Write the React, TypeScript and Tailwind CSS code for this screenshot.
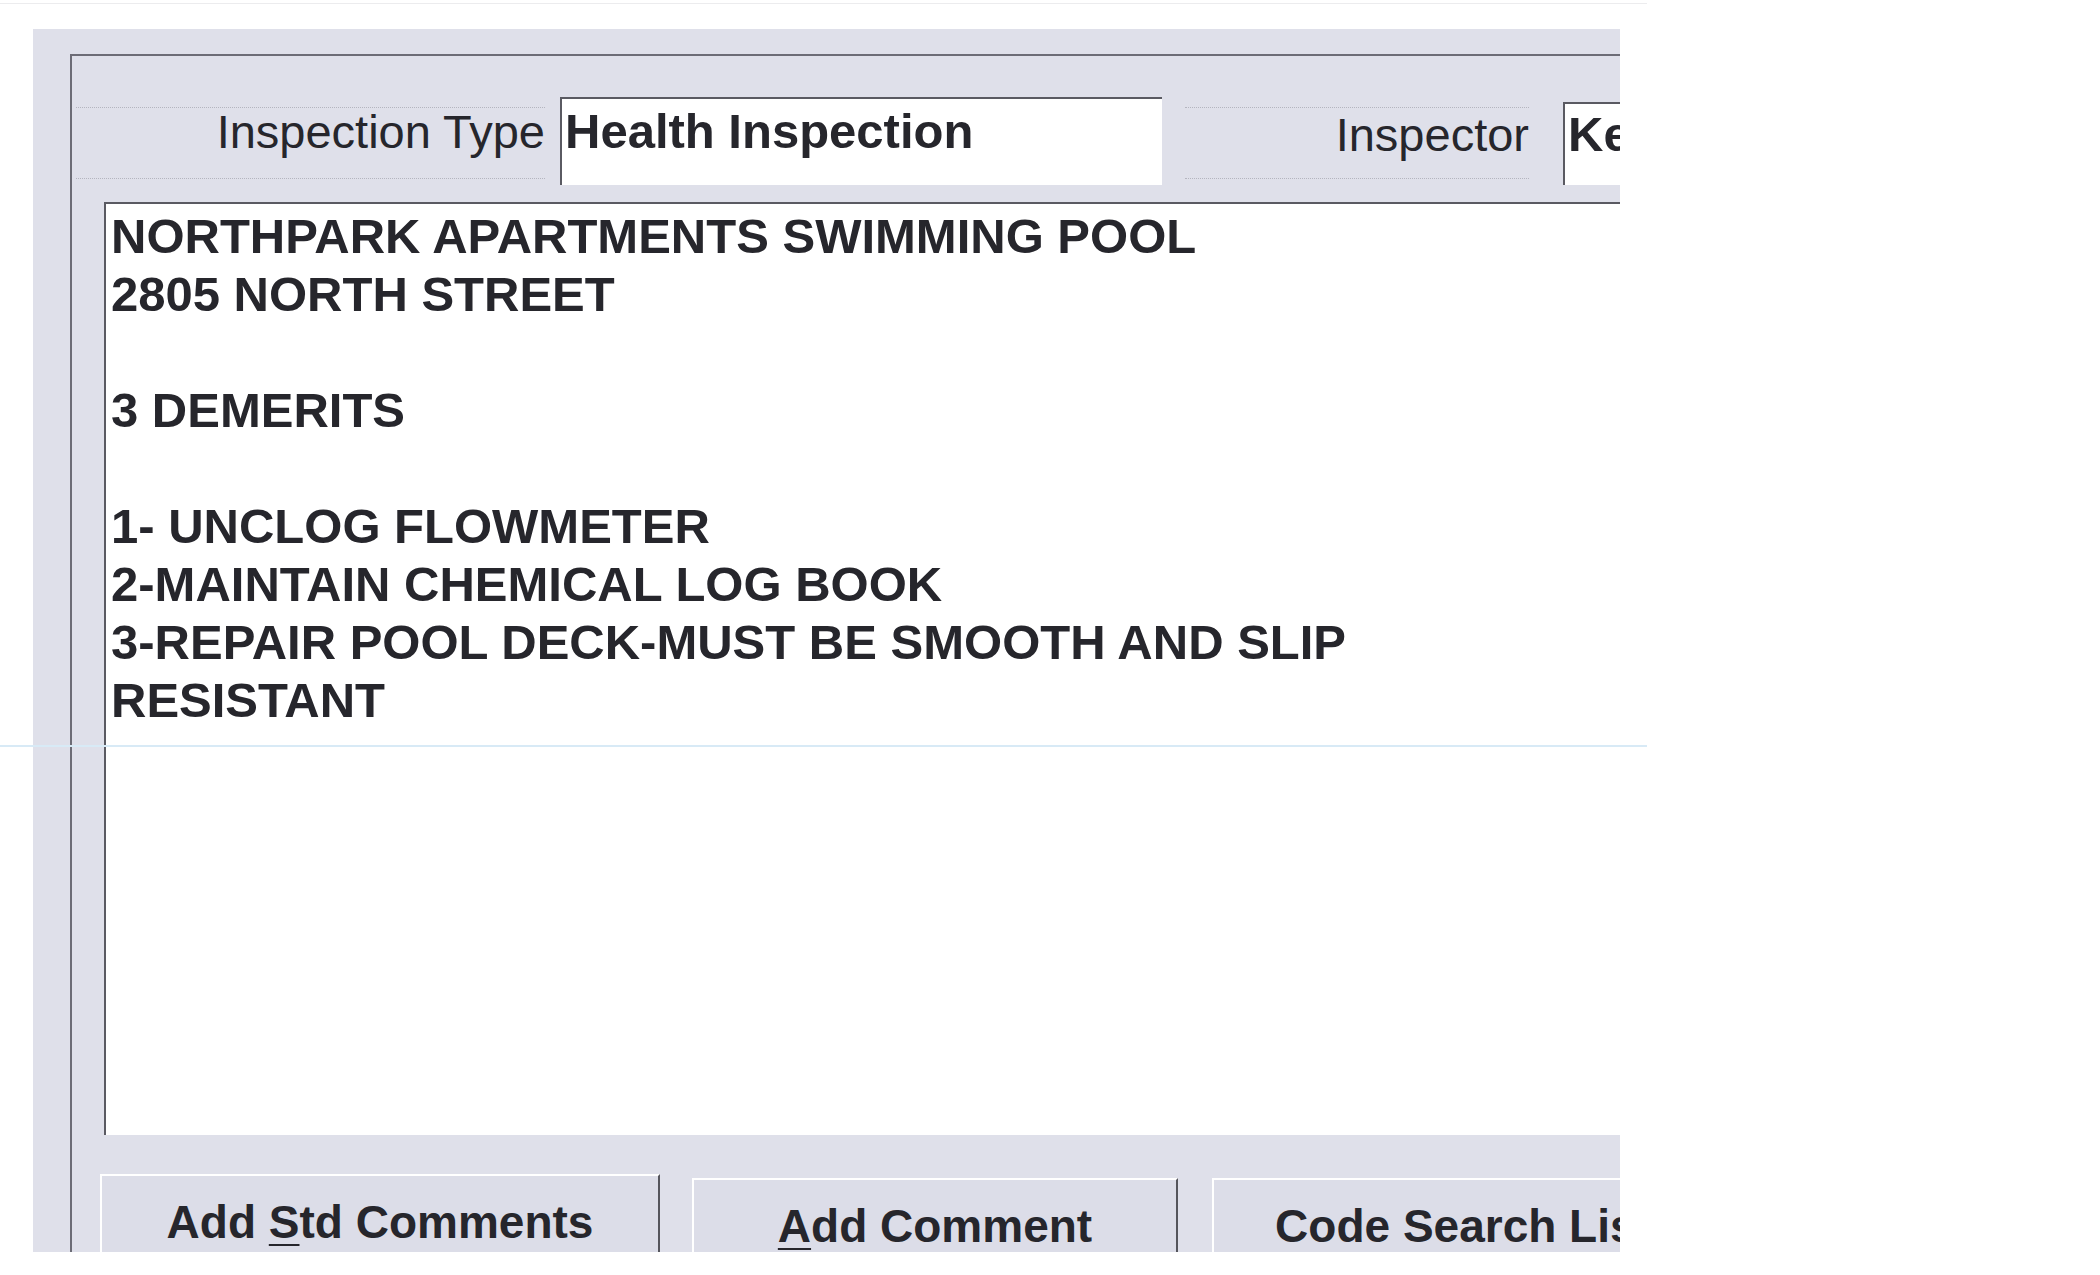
import React from "react";

const lines = [
  "NORTHPARK APARTMENTS SWIMMING POOL",
  "2805 NORTH STREET",
  "",
  "3 DEMERITS",
  "",
  "1- UNCLOG FLOWMETER",
  "2-MAINTAIN CHEMICAL LOG BOOK",
  "3-REPAIR POOL DECK-MUST BE SMOOTH AND SLIP",
  "RESISTANT",
];

const FormButton = ({ width, left, children }: { width: string; left: string; children: React.ReactNode }) => (
  <div
    className={`${width} ${left} h-[120px] shrink-0 border-t-2 border-l-2 border-r-2 border-t-white border-l-white border-r-[#55555c] bg-[#dcdde8] pt-[23px] text-center text-[46px] font-bold leading-[46px] whitespace-nowrap`}
  >
    {children}
  </div>
);

export default function App() {
  return (
    <div className="relative w-[2100px] h-[1275px] overflow-hidden bg-white font-['Liberation_Sans',Arial,sans-serif] text-[#26262c]">
      <div className="mt-[3px] h-px w-[1647px] bg-[#ececee]" />
      <div className="ml-[33px] mt-[25px] h-[1223px] w-[1587px] overflow-hidden bg-[#dfe0ea] pl-[37px] pt-[25px]">
        <div className="flex h-full w-[2000px] flex-col border-l-2 border-t-2 border-[#6c6c76]">
          {/* header row */}
          <div className="flex h-[146px] shrink-0 items-start">
            <div className="ml-[4px] mt-[51px] h-[72px] w-[469px] shrink-0 border-y border-dotted border-[#b4b5bf] pt-[1px] text-right text-[47px] leading-[46px]">
              Inspection Type
            </div>
            <div className="ml-[15px] mt-[41px] h-[88px] w-[602px] shrink-0 border-l-2 border-t-2 border-[#5a5a62] bg-white pl-[3px] pt-[4px] text-[49px] font-bold leading-[56px]">
              Health Inspection
            </div>
            <div className="ml-[23px] mt-[51px] h-[72px] w-[344px] shrink-0 border-y border-dotted border-[#b4b5bf] pt-[4px] text-right text-[47px] leading-[46px]">
              Inspector
            </div>
            <div className="ml-[34px] mt-[46px] h-[83px] w-[400px] shrink-0 border-l-2 border-t-2 border-[#5a5a62] bg-white pl-[3px] pt-[2px] text-[49px] font-bold leading-[56px] whitespace-nowrap">
              Kevin
            </div>
          </div>

          {/* comment area */}
          <div className="ml-[32px] h-[933px] shrink-0 border-l-2 border-t-2 border-[#5a5a62] bg-white pl-[5px] pt-[3px] text-[49px] font-bold leading-[58px] whitespace-nowrap">
            {lines.map((l, i) => (
              <div key={i} className="h-[58px]">
                {l}
              </div>
            ))}
          </div>

          {/* buttons */}
          <div className="flex items-start pt-[39px]">
            <FormButton width="w-[560px]" left="ml-[28px]">
              Add <u className="underline-offset-[6px] decoration-2">S</u>td Comments
            </FormButton>
            <FormButton width="w-[486px]" left="ml-[32px] mt-[4px]">
              <u className="underline-offset-[6px] decoration-2">A</u>dd Comment
            </FormButton>
            <FormButton width="w-[502px]" left="ml-[34px] mt-[4px]">
              Code Search List
            </FormButton>
          </div>
        </div>
      </div>

      {/* faint scanner streak */}
      <div className="absolute left-0 top-[745px] h-[2px] w-[1647px] bg-[#d8eaf6]" />
    </div>
  );
}
